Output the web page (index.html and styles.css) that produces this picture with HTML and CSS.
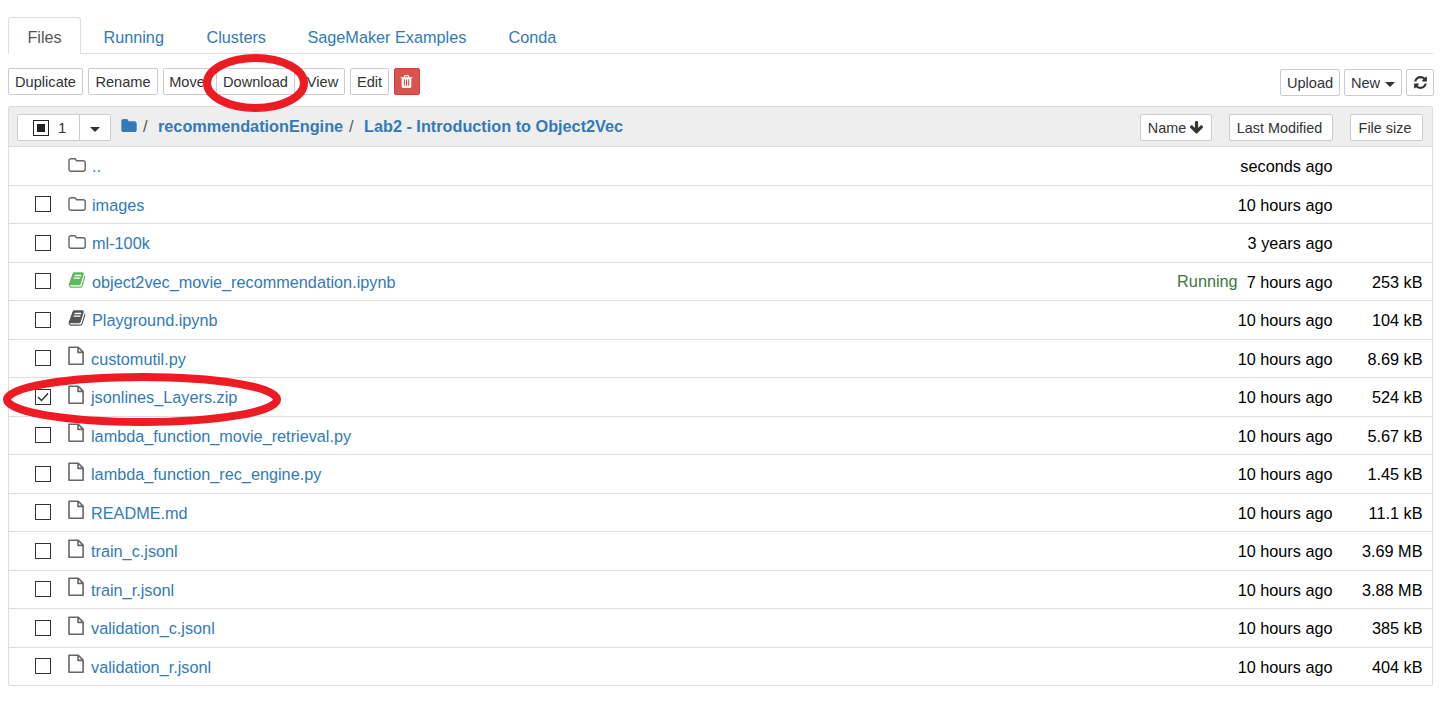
FILE: index.html
```html
<!DOCTYPE html>
<html lang="en">
<head>
<meta charset="utf-8">
<title>Files</title>
<link rel="stylesheet" href="styles.css">
</head>
<body>
<svg class="defs" width="0" height="0">
  <symbol id="folder-o" viewBox="0 0 18 16"><path d="M3 1.7h4l1.6 2h6.6a2 2 0 0 1 2 2v6.6a2 2 0 0 1-2 2H3a2 2 0 0 1-2-2V3.7a2 2 0 0 1 2-2z" fill="none" stroke="#666" stroke-width="1.4"/></symbol>
  <symbol id="file-o" viewBox="0 0 17 20"><path d="M1 1.300h9.300l4.800 4.800v12.100H1zM10 1.300v5.100h5.100" fill="none" stroke="#666" stroke-width="1.600" stroke-linejoin="round"/></symbol>
  <symbol id="folder" viewBox="64 128 1664 1408"><path d="M1728 608v704q0 92-66 158t-158 66h-1216q-92 0-158-66t-66-158v-960q0-92 66-158t158-66h320q92 0 158 66t66 158v32h672q92 0 158 66t66 158z"/></symbol>
  <symbol id="book" viewBox="0 0 1792 1792"><path d="M1703 478q40 57 18 129l-275 906q-19 64-76.500 107.500t-122.500 43.500h-923q-77 0-148.500-53.500t-99.500-131.500q-24-67-2-127 0-4 3-27t4-37q1-8-3-21.500t-3-19.500q2-11 8-21t16.500-23.500 16.500-23.500q23-38 45-91.500t30-91.500q3-10 .5-30t-.5-28q3-11 17-28t17-23q21-36 42-92t25-90q1-9-2.500-32t.5-28q4-13 22-30.500t22-22.500q19-26 42.500-84.500t27.500-96.500q1-8-3-25.500t-2-26.500q2-8 9-18t18-23 17-21q8-12 16.500-30.500t15-35 16-36 19.500-32 26.500-23.500 36-11.500 47.500 5.500l-1 3q38-9 51-9h761q74 0 114 56t18 130l-274 906q-36 119-71.500 153.500t-128.500 34.500h-869q-27 0-38 15-11 16-1 43 24 70 144 70h923q29 0 56-15.500t35-41.500l300-987q7-22 5-57 38 15 59 43zm-1064 2q-4 13 2 22.500t20 9.500h608q13 0 25.500-9.500t16.500-22.500l21-64q4-13-2-22.500t-20-9.500h-608q-13 0-25.500 9.500t-16.500 22.500zm-83 256q-4 13 2 22.500t20 9.500h608q13 0 25.500-9.500t16.500-22.500l21-64q4-13-2-22.500t-20-9.500h-608q-13 0-25.500 9.500t-16.500 22.500z"/></symbol>
  <symbol id="trash" viewBox="0 0 1792 1792"><path d="M704 1376v-704q0-14-9-23t-23-9h-64q-14 0-23 9t-9 23v704q0 14 9 23t23 9h64q14 0 23-9t9-23zm256 0v-704q0-14-9-23t-23-9h-64q-14 0-23 9t-9 23v704q0 14 9 23t23 9h64q14 0 23-9t9-23zm256 0v-704q0-14-9-23t-23-9h-64q-14 0-23 9t-9 23v704q0 14 9 23t23 9h64q14 0 23-9t9-23zm-544-992h448l-48-117q-7-9-17-11h-317q-10 2-17 11zm928 32v64q0 14-9 23t-23 9h-96v948q0 83-47 143.500t-113 60.500h-832q-66 0-113-58.500t-47-141.500v-952h-96q-14 0-23-9t-9-23v-64q0-14 9-23t23-9h309l70-167q15-37 54-63t79-26h320q40 0 79 26t54 63l70 167h309q14 0 23 9t9 23z"/></symbol>
  <symbol id="refresh" viewBox="0 0 1792 1792"><path d="M1639 1056q0 5-1 7-64 268-268 434.500t-478 166.500q-146 0-282.500-55t-243.500-157l-129 129q-19 19-45 19t-45-19-19-45v-448q0-26 19-45t45-19h448q26 0 45 19t19 45-19 45l-137 137q71 66 161 102t187 36q134 0 250-65t186-179q11-17 53-117 8-23 30-23h192q13 0 22.500 9.500t9.500 22.500zm25-800v448q0 26-19 45t-45 19h-448q-26 0-45-19t-19-45 19-45l138-138q-148-137-349-137-134 0-250 65t-186 179q-11 17-53 117-8 23-30 23h-199q-13 0-22.500-9.500t-9.500-22.500v-7q65-268 270-434.500t480-166.500q146 0 284 55.500t245 156.500l130-129q19-19 45-19t45 19 19 45z"/></symbol>
  <symbol id="arrow" viewBox="0 0 1792 1792"><path d="M1675 832q0 53-37 90l-651 652q-39 37-91 37-53 0-90-37l-651-652q-38-36-38-90 0-53 38-91l74-75q39-37 91-37 53 0 90 37l294 294v-704q0-52 38-90t90-38h128q52 0 90 38t38 90v704l294-294q37-37 90-37 52 0 91 37l75 75q37 39 37 91z"/></symbol>
</svg>
<nav class="tabs">
  <a class="tab active">Files</a><a class="tab running-tab">Running</a><a class="tab clusters">Clusters</a><a class="tab examples">SageMaker Examples</a><a class="tab">Conda</a>
</nav>
<div class="toolbar">
  <div class="actions">
    <button class="btn w75">Duplicate</button><button class="btn w70">Rename</button><button class="btn w48">Move</button><button class="btn w79">Download</button><button class="btn w45">View</button><button class="btn w39">Edit</button><button class="btn danger"><svg class="trash"><use href="#trash"/></svg></button>
  </div>
  <div class="right">
    <button class="btn w60">Upload</button><button class="btn w58">New<i class="caret"></i></button><button class="btn w28"><svg class="refresh"><use href="#refresh"/></svg></button>
  </div>
</div>
<main class="list">
  <header class="head">
    <div class="select"><span class="count"><i class="box partial"></i>1</span><span class="drop"><i class="caret"></i></span></div>
    <div class="crumbs"><svg class="home"><use href="#folder"/></svg><span class="slash">/</span><a class="c1">recommendationEngine</a><span class="slash">/</span><a class="c2">Lab2 - Introduction to Object2Vec</a></div>
    <div class="sorts"><button class="btn w72">Name<svg class="arrow"><use href="#arrow"/></svg></button><button class="btn w104">Last Modified</button><button class="btn w73">File size</button></div>
  </header>
  <div class="row"><i class="box hidden"></i><svg class="folder"><use href="#folder-o"/></svg><a class="name">..</a><span class="time">seconds ago</span><span class="size"></span></div>
  <div class="row"><i class="box"></i><svg class="folder"><use href="#folder-o"/></svg><a class="name">images</a><span class="time">10 hours ago</span><span class="size"></span></div>
  <div class="row"><i class="box"></i><svg class="folder"><use href="#folder-o"/></svg><a class="name">ml-100k</a><span class="time">3 years ago</span><span class="size"></span></div>
  <div class="row"><i class="box"></i><svg class="book green"><use href="#book"/></svg><a class="name">object2vec_movie_recommendation.ipynb</a><span class="status">Running</span><span class="time">7 hours ago</span><span class="size">253 kB</span></div>
  <div class="row"><i class="box"></i><svg class="book"><use href="#book"/></svg><a class="name">Playground.ipynb</a><span class="time">10 hours ago</span><span class="size">104 kB</span></div>
  <div class="row"><i class="box"></i><svg class="file"><use href="#file-o"/></svg><a class="name">customutil.py</a><span class="time">10 hours ago</span><span class="size">8.69 kB</span></div>
  <div class="row"><i class="box"><svg class="check" viewBox="0 0 14 14"><path d="M2 7l3.500 3.500L12 3.500"/></svg></i><svg class="file"><use href="#file-o"/></svg><a class="name">jsonlines_Layers.zip</a><span class="time">10 hours ago</span><span class="size">524 kB</span></div>
  <div class="row"><i class="box"></i><svg class="file"><use href="#file-o"/></svg><a class="name">lambda_function_movie_retrieval.py</a><span class="time">10 hours ago</span><span class="size">5.67 kB</span></div>
  <div class="row"><i class="box"></i><svg class="file"><use href="#file-o"/></svg><a class="name">lambda_function_rec_engine.py</a><span class="time">10 hours ago</span><span class="size">1.45 kB</span></div>
  <div class="row"><i class="box"></i><svg class="file"><use href="#file-o"/></svg><a class="name">README.md</a><span class="time">10 hours ago</span><span class="size">11.1 kB</span></div>
  <div class="row"><i class="box"></i><svg class="file"><use href="#file-o"/></svg><a class="name">train_c.jsonl</a><span class="time">10 hours ago</span><span class="size">3.69 MB</span></div>
  <div class="row"><i class="box"></i><svg class="file"><use href="#file-o"/></svg><a class="name">train_r.jsonl</a><span class="time">10 hours ago</span><span class="size">3.88 MB</span></div>
  <div class="row"><i class="box"></i><svg class="file"><use href="#file-o"/></svg><a class="name">validation_c.jsonl</a><span class="time">10 hours ago</span><span class="size">385 kB</span></div>
  <div class="row"><i class="box"></i><svg class="file"><use href="#file-o"/></svg><a class="name">validation_r.jsonl</a><span class="time">10 hours ago</span><span class="size">404 kB</span></div>
</main>
<svg class="marks" viewBox="0 0 1456 707"><ellipse cx="255.500" cy="83" rx="48.500" ry="25"/><ellipse cx="142" cy="399.500" rx="135" ry="22.500"/></svg>
</body>
</html>
```

FILE: styles.css
```css
* { box-sizing: border-box; }
body { margin: 0; padding: 17px 23px 0 8px; height: 707px; overflow: hidden; position: relative; background: #fff; color: #000; font: 16.25px/22px "Liberation Sans", Arial, sans-serif; }
svg { fill: currentColor; flex: none; }
.defs { display: block; height: 0; }
.tabs { display: flex; height: 37px; border-bottom: 1px solid #ddd; }
.tab { height: 37px; padding: 8px 18px 0 18.400px; color: #337ab7; border: 1px solid transparent; white-space: nowrap; margin-right: 3px; }
.active { width: 73px; color: #555; background: #fff; border-color: #ddd #ddd #fff; border-radius: 3px 3px 0 0; }
.running-tab { width: 100px; }
.clusters { width: 98px; }
.examples { width: 198px; }
.toolbar { display: flex; justify-content: space-between; height: 52px; padding-top: 14px; margin-right: -1px; }
.actions, .right { display: flex; gap: 5px; }
.right { gap: 4px; padding-top: 1px; }
.btn { display: flex; align-items: center; justify-content: center; height: 27px; padding: 0; color: #333; background: #fff; border: 1px solid #ccc; border-radius: 2px; font: 14.6px/20px "Liberation Sans", Arial, sans-serif; white-space: nowrap; }
.w75 { width: 75px; }
.w70 { width: 70px; }
.w48 { width: 48px; }
.w79 { width: 79px; }
.w45 { width: 45px; }
.w39 { width: 39px; }
.w60 { width: 60px; }
.w58 { width: 58px; }
.w28 { width: 28px; }
.w72 { width: 72px; }
.w104 { width: 104px; padding-right: 3px; }
.w73 { width: 73px; padding-right: 3px; }
.sorts .btn { font-size: 14.400px; }
.danger { width: 26px; color: #fff; background: #d9534f; border-color: #d43f3a; }
.trash { width: 15px; height: 15px; margin-right: 1px; }
.refresh { width: 15px; height: 15px; }
.arrow { width: 15px; height: 15px; margin-left: 3px; }
.caret { flex: none; width: 0; height: 0; border: 5px solid transparent; border-top-color: #333; border-bottom: 0; margin-left: 5px; margin-top: 3px; }
.list { border: 1px solid #ddd; border-radius: 2px; height: 580px; }
.head { display: flex; height: 40px; background: #eee; border-bottom: 1px solid #ddd; padding: 7px 9px 0 8px; }
.select { display: flex; width: 94px; height: 27px; background: #fff; border: 1px solid #ccc; border-radius: 2px; color: #333; font-size: 15px; }
.count { display: flex; align-items: center; width: 62px; padding-left: 15px; gap: 9px; border-right: 1px solid #ccc; }
.drop { display: flex; align-items: center; padding-left: 5px; }
.box { display: block; flex: none; width: 16px; height: 16px; border: 1px solid #333; background: #fff; }
.partial { border-color: #222; padding: 3px; background: #222 content-box; }
.crumbs { display: flex; flex: 1; padding-left: 10px; color: #555; white-space: nowrap; }
.crumbs a { color: #337ab7; font-weight: bold; }
.home { width: 16px; height: 13px; margin: 5px 6px 0 0; color: #337ab7; }
.slash { width: 5px; line-height: 24px; }
.c1 { width: 185px; margin: 1px 6px 0 10px; line-height: 22px; }
.c2 { margin: 1px 0 0 10px; }
.sorts { display: flex; gap: 17px; }
.row { display: flex; height: 38.5px; border-bottom: 1px solid #ddd; padding: 8.400px 9.500px 0 26px; }
.row:last-child { border-bottom: 0; }
.row .box { margin-top: 2.300px; }
.hidden { visibility: hidden; }
.folder { width: 18px; height: 16px; margin: 2.050px 6px 0 17px; }
.file { width: 17px; height: 20px; margin: -1.500px 6px 0 17px; }
.book { width: 18px; height: 18px; margin: -0.400px 6px 0 17px; color: #555; }
.green { color: #5cb85c; }
.name { flex: 1; color: #337ab7; line-height: 23px; }
.time, .size { line-height: 23px; text-align: right; white-space: nowrap; }
.size { width: 90px; }
.status { color: #3c763d; margin-right: 9px; line-height: 21px; }
.check { display: block; width: 14px; height: 14px; fill: none; stroke: #333; stroke-width: 1.5; }
.marks { position: absolute; left: 0; top: 0; width: 1456px; height: 707px; fill: none; stroke: #ed1c24; stroke-width: 8px; pointer-events: none; }
```
